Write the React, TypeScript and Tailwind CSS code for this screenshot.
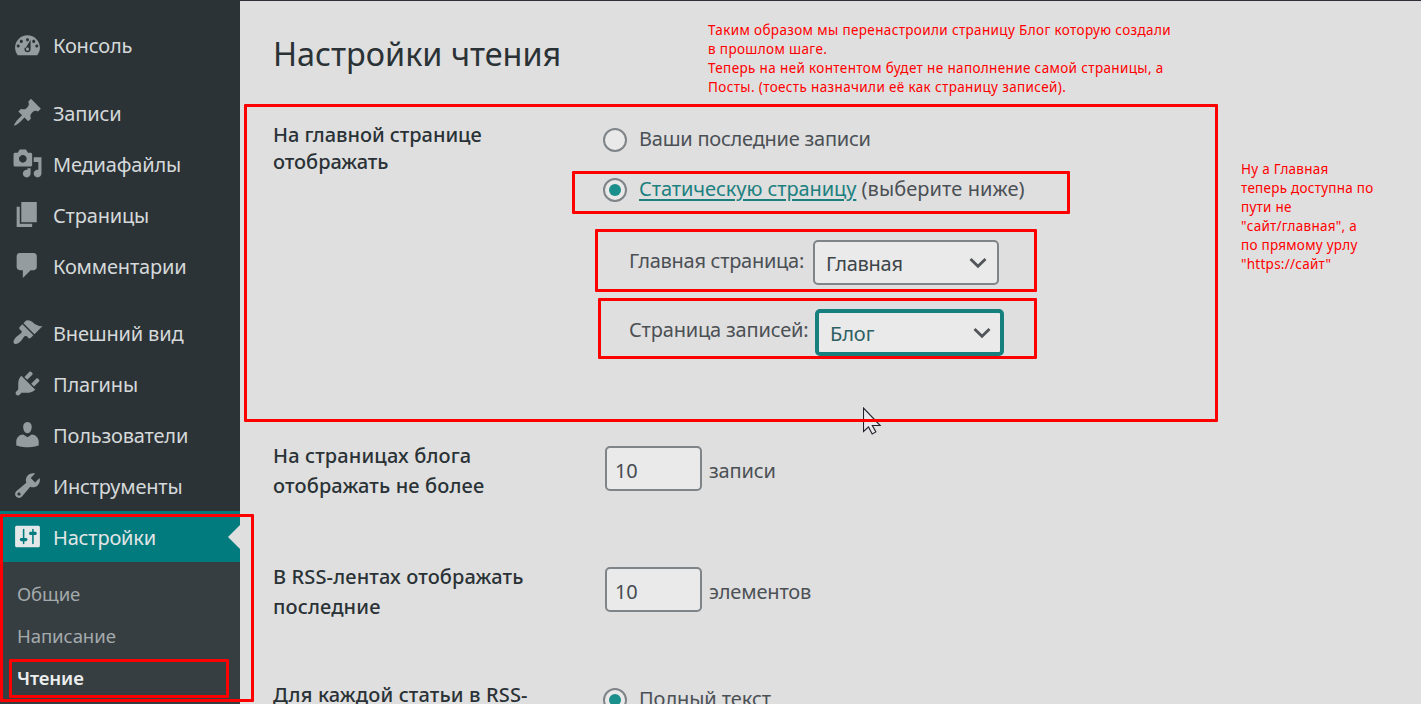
import type { ReactNode } from "react";

const ICONS = {
  dashboard:
    "M3.76 17h12.48c1.1-1.37 1.76-3.11 1.76-5 0-4.42-3.58-8-8-8s-8 3.58-8 8c0 1.89.66 3.63 1.76 5zM10 6c.55 0 1 .45 1 1s-.45 1-1 1-1-.45-1-1 .45-1 1-1zM6 7c.55 0 1 .45 1 1s-.45 1-1 1-1-.45-1-1 .45-1 1-1zm8 0c.55 0 1 .45 1 1s-.45 1-1 1-1-.45-1-1 .45-1 1-1zm-5.37 5.55L12 7v6c0 1.1-.9 2-2 2s-2-.9-2-2c0-.57.24-1.08.63-1.45zM4 10c.55 0 1 .45 1 1s-.45 1-1 1-1-.45-1-1 .45-1 1-1zm12 0c.55 0 1 .45 1 1s-.45 1-1 1-1-.45-1-1 .45-1 1-1zm-5 3c0-.55-.45-1-1-1s-1 .45-1 1 .45 1 1 1 1-.45 1-1z",
  post: "M10.44 3.02l1.82-1.82 6.36 6.35-1.83 1.82c-1.05-.68-2.48-.57-3.41.36l-.75.75c-.92.93-1.04 2.35-.35 3.41l-1.83 1.82-2.41-2.41-2.8 2.79c-.42.42-3.38 2.71-3.8 2.29s1.86-3.39 2.28-3.81l2.79-2.79L4.1 9.36l1.83-1.82c1.05.69 2.48.57 3.4-.36l.75-.75c.93-.92 1.05-2.35.36-3.41z",
  media:
    "M13 11V4c0-.55-.45-1-1-1h-1.67L9 1H5L3.67 3H2c-.55 0-1 .45-1 1v7c0 .55.45 1 1 1h10c.55 0 1-.45 1-1zM7 4.5c1.38 0 2.5 1.12 2.5 2.5S8.38 9.5 7 9.5 4.5 8.38 4.5 7 5.62 4.5 7 4.5zM14 6h5v10.5c0 1.38-1.12 2.5-2.5 2.5S14 17.88 14 16.5s1.12-2.5 2.5-2.5c.17 0 .34.02.5.05V9h-3V6zm-4 8.05V13h2v3.5c0 1.38-1.12 2.5-2.5 2.5S7 17.88 7 16.5 8.12 14 9.5 14c.17 0 .34.02.5.05z",
  page: "M6 15V2h10v13H6zm-1 1h8v2H3V5h2v11z",
  comments:
    "M5 2h9c1.1 0 2 .9 2 2v7c0 1.1-.9 2-2 2h-2l-5 5v-5H5c-1.1 0-2-.9-2-2V4c0-1.1.9-2 2-2z",
  appearance:
    "M14.48 11.06L7.41 3.99l1.5-1.5c.5-.56 2.3-.47 3.51.32 1.21.8 1.43 1.28 2.91 2.1 1.18.64 2.45 1.26 4.45.85zm-.71.71L6.7 4.7 4.93 6.47c-.39.39-.39 1.02 0 1.41l1.06 1.06c.39.39.39 1.03 0 1.42-.6.6-1.43 1.11-2.21 1.69-.35.26-.7.53-1.01.84C1.43 14.23.4 16.08 1.4 17.07c.99 1 2.84-.03 4.18-1.36.31-.31.58-.66.85-1.02.57-.78 1.08-1.61 1.69-2.21.39-.39 1.02-.39 1.41 0l1.06 1.06c.39.39 1.02.39 1.41 0z",
  plugins:
    "M13.11 4.36L9.87 7.6 8 5.73l3.24-3.24c.35-.34 1.05-.2 1.56.32.52.51.66 1.21.31 1.55zm-8 1.77l.91-1.12 9.01 9.01-1.19.84c-.71.71-2.63 1.16-3.82 1.16H6.14L4.9 17.26c-.59.59-1.54.59-2.12 0-.59-.58-.59-1.53 0-2.12l1.24-1.24v-3.88c0-1.13.4-3.19 1.09-3.89zm7.26 3.97l3.24-3.24c.34-.35 1.04-.21 1.55.31.52.51.66 1.21.31 1.55l-3.24 3.25z",
  users:
    "M10 9.25c-2.27 0-2.73-3.44-2.73-3.44C7 4.02 7.82 2 9.97 2c2.16 0 2.98 2.02 2.71 3.81 0 0-.41 3.44-2.68 3.44zm0 2.57L12.72 10c2.39 0 4.52 2.33 4.52 4.53v2.49s-3.65 1.13-7.24 1.13c-3.65 0-7.24-1.13-7.24-1.13v-2.49c0-2.25 1.94-4.48 4.47-4.48z",
  tools:
    "M16.68 9.77c-1.34 1.34-3.3 1.67-4.95.99l-5.41 6.52c-.99.99-2.59.99-3.58 0s-.99-2.59 0-3.57l6.52-5.42c-.68-1.65-.35-3.61.99-4.95 1.28-1.28 3.12-1.62 4.72-1.06l-2.89 2.89 2.82 2.82 2.86-2.87c.53 1.58.18 3.39-1.08 4.65zM3.81 16.21c.4.39 1.04.39 1.43 0 .4-.4.4-1.04 0-1.43-.39-.4-1.03-.4-1.43 0-.39.39-.39 1.03 0 1.43z",
  settings:
    "M18 16V4c0-.55-.45-1-1-1H3c-.55 0-1 .45-1 1v12c0 .55.45 1 1 1h14c.55 0 1-.45 1-1zM8 11h1c.55 0 1 .45 1 1s-.45 1-1 1H8v1.5c0 .28-.22.5-.5.5s-.5-.22-.5-.5V13H6c-.55 0-1-.45-1-1s.45-1 1-1h1V5.5c0-.28.22-.5.5-.5s.5.22.5.5V11zm5-2h-1c-.55 0-1-.45-1-1s.45-1 1-1h1V5.5c0-.28.22-.5.5-.5s.5.22.5.5V7h1c.55 0 1 .45 1 1s-.45 1-1 1h-1v5.5c0 .28-.22.5-.5.5s-.5-.22-.5-.5V9z",
};

type IconName = keyof typeof ICONS;

const MENU: { icon: IconName; label: string }[][] = [
  [{ icon: "dashboard", label: "Консоль" }],
  [
    { icon: "post", label: "Записи" },
    { icon: "media", label: "Медиафайлы" },
    { icon: "page", label: "Страницы" },
    { icon: "comments", label: "Комментарии" },
  ],
  [
    { icon: "appearance", label: "Внешний вид" },
    { icon: "plugins", label: "Плагины" },
    { icon: "users", label: "Пользователи" },
    { icon: "tools", label: "Инструменты" },
    { icon: "settings", label: "Настройки" },
  ],
];

function MenuItem({ icon, label }: { icon: IconName; label: string }) {
  const active = icon === "settings";
  return (
    <a
      className={
        "relative flex h-[51px] items-center pl-[12px] " +
        (active ? "bg-[#027b7e] text-[#e2e6e6]" : "text-[#d5d9da]")
      }
    >
      <svg
        viewBox="0 0 20 20"
        className={"mb-px h-[31px] w-[31px] shrink-0 " + (active ? "fill-[#e4e8e8]" : "fill-[#959c9f]")}
      >
        <path d={ICONS[icon]} />
      </svg>
      <span className="ml-[10px] pt-[2px] text-[20px] leading-[30px] tracking-[-0.18px]">{label}</span>
      {active && (
        <svg viewBox="0 0 12 24" className="absolute top-[14px] right-0 h-6 w-3 fill-[#dfdfdf]">
          <path d="M12 0v24L0 12z" />
        </svg>
      )}
    </a>
  );
}

function Sidebar() {
  return (
    <aside className="flex w-[240px] shrink-0 flex-col gap-4 bg-[#2c3337] pt-[19px]">
      {MENU.map((group, i) => (
        <nav key={i} className={i === 0 ? "mb-px" : ""}>
          {group.map((item) => (
            <MenuItem key={item.label} {...item} />
          ))}
          {i === 2 && (
            <ul className="h-[160px] bg-[#373e42] pt-[11px] pl-[17px] text-[18.6px] leading-[42px] tracking-[-0.1px] text-[#a4aaac]">
              <li>Общие</li>
              <li>Написание</li>
              <li className="font-semibold text-[#eceeee]">Чтение</li>
            </ul>
          )}
        </nav>
      ))}
    </aside>
  );
}

function Row({ label, className, children }: { label: ReactNode; className: string; children: ReactNode }) {
  return (
    <section className={"flex shrink-0 " + className}>
      <h2 className="w-[330px] shrink-0 font-medium tracking-[0.14px] text-[#2a3236]">{label}</h2>
      <div className="text-[#4b5055]">{children}</div>
    </section>
  );
}

function Radio({ checked, children }: { checked?: boolean; children: ReactNode }) {
  return (
    <label className="flex h-[30px] items-center">
      <span className="mt-[2px] flex h-6 w-6 shrink-0 items-center justify-center rounded-full border-2 border-[#7f8488] bg-[#e9e9ea]">
        {checked && <span className="h-3 w-3 rounded-full bg-[#1b8f8b]" />}
      </span>
      <span className="ml-3 whitespace-nowrap">{children}</span>
    </label>
  );
}

function Chevron() {
  return (
    <svg viewBox="0 0 18 12" className="h-3 w-[18px] fill-none stroke-[#515559] stroke-[2.8]">
      <path d="M1.5 2 9 9.2 16.5 2" />
    </svg>
  );
}

function NumberField({ unit }: { unit: string }) {
  return (
    <div className="flex pt-[5px] pl-[2px]">
      <span className="flex h-[45px] w-[97px] items-center rounded-[5px] border-2 border-[#7f8488] bg-[#eaeaeb] pt-[4px] pl-[8px] text-[#454c51]">
        10
      </span>
      <span className="ml-[7px] pt-[10px] tracking-[-0.15px]">{unit}</span>
    </div>
  );
}

function Frame({ className }: { className: string }) {
  return <div className={"absolute rounded-[1px] border-[3px] border-[#ff0000] " + className} />;
}

export default function App() {
  return (
    <div className="relative flex h-[704px] w-[1421px] overflow-hidden bg-[#dfdfdf] font-['Noto_Sans','Open_Sans',sans-serif]">
      <Sidebar />
      <main className="flex min-w-0 flex-1 flex-col border-t border-[#2f2f39] pl-[33px] text-[20px] leading-[30px] tracking-[-0.08px]">
        <h1 className="h-[120px] shrink-0 pt-[32px] text-[32.4px] leading-[40px] tracking-normal text-[#2a3236]">
          Настройки чтения
        </h1>
        <Row
          className="h-[320px]"
          label={
            <span className="block leading-[27px] tracking-[-0.04px]">
              На главной странице
              <br />
              отображать
            </span>
          }
        >
          <div className="flex flex-col gap-[20px] pt-[3px]">
            <Radio>
              <span className="tracking-[-0.24px]">Ваши последние записи</span>
            </Radio>
            <Radio checked>
              <a className="text-[#1c807f] underline decoration-2 underline-offset-[3px]">Статическую страницу</a>{" "}
              <span className="tracking-[0.09px]">(выберите ниже)</span>
            </Radio>
          </div>
          <div className="mt-[36px] ml-[26px] flex">
            <span className="mt-[6px] w-[184px] tracking-[-0.28px] whitespace-nowrap">Главная страница:</span>
            <span className="flex h-[45px] w-[186px] items-center justify-between rounded-[5px] border-2 border-[#7f8488] bg-[#eaeaea] pr-[10px] pl-[11px] text-[#3c4549]">
              <span className="pt-[2px] tracking-[-0.28px]">Главная</span>
              <Chevron />
            </span>
          </div>
          <div className="mt-[23px] ml-[26px] flex">
            <span className="mt-[7px] w-[186px] tracking-[-0.18px] whitespace-nowrap">Страница записей:</span>
            <span className="mt-px flex h-[47px] w-[189px] items-center justify-between rounded-[5px] border-4 border-[#16807f] bg-[#eaeaea] pr-[9px] pl-[11px] text-[#2d6062]">
              <span className="pt-[3px]">Блог</span>
              <Chevron />
            </span>
          </div>
        </Row>
        <Row
          className="h-[121px]"
          label={
            <>
              На страницах блога
              <br />
              отображать не более
            </>
          }
        >
          <NumberField unit="записи" />
        </Row>
        <Row
          className="h-[118px]"
          label={
            <>
              В RSS-лентах отображать
              <br />
              последние
            </>
          }
        >
          <NumberField unit="элементов" />
        </Row>
        <Row className="h-[60px]" label="Для каждой статьи в RSS-">
          <div className="pt-[4px]">
            <Radio checked>Полный текст</Radio>
          </div>
        </Row>
      </main>

      {/* Mouse pointer */}
      <svg viewBox="0 0 19 28" className="absolute top-[407px] left-[863px] h-7 w-[19px]">
        <path
          d="M.5 1v23.5l5-4.6 3.7 7 3.7-2-3.6-6.4h7.9z"
          fill="#e9e9ec"
          stroke="#22222c"
          strokeWidth="1.1"
        />
      </svg>

      {/* Annotations drawn over the page */}
      <Frame className="top-[104px] left-[244px] h-[318px] w-[974px]" />
      <Frame className="top-[171px] left-[572px] h-[43px] w-[498px]" />
      <Frame className="top-[229px] left-[595px] h-[63px] w-[442px]" />
      <Frame className="top-[298px] left-[598px] h-[61px] w-[439px]" />
      <Frame className="top-[514px] left-0 h-[188px] w-[254px]" />
      <Frame className="top-[659px] left-[9px] h-[39px] w-[220px]" />
      <p className="absolute top-[21px] left-[708px] text-[13.5px] leading-[19px] tracking-[0.36px] whitespace-nowrap text-[#ff0000]">
        Таким образом мы перенастроили страницу Блог которую создали
        <br />
        в прошлом шаге.
        <br />
        Теперь на ней контентом будет не наполнение самой страницы, а
        <br />
        Посты. (тоесть назначили её как страницу записей).
      </p>
      <p className="absolute top-[160px] left-[1241px] text-[13.5px] leading-[19px] tracking-[0.25px] whitespace-nowrap text-[#ff0000]">
        Ну а Главная
        <br />
        теперь доступна по
        <br />
        пути не
        <br />
        "сайт/главная", а
        <br />
        по прямому урлу
        <br />
        "https://сайт"
      </p>
    </div>
  );
}
